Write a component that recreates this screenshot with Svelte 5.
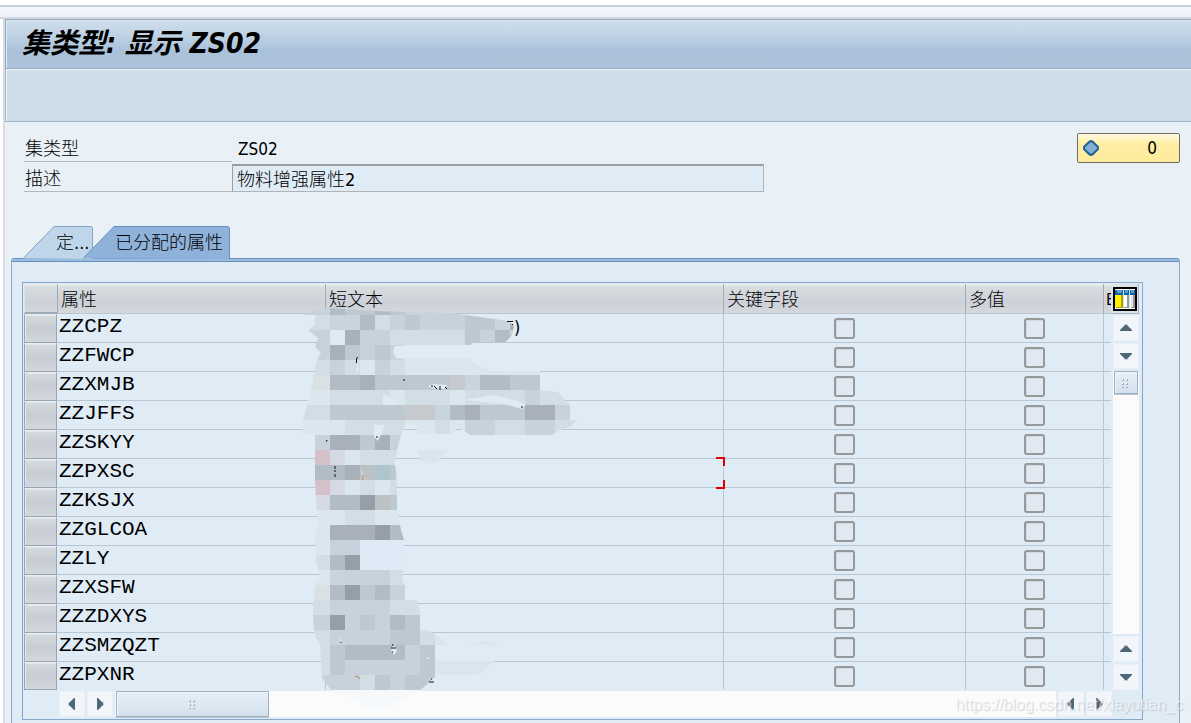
<script>
  const rows = [
    'ZZCPZ', 'ZZFWCP', 'ZZXMJB', 'ZZJFFS', 'ZZSKYY', 'ZZPXSC', 'ZZKSJX',
    'ZZGLCOA', 'ZZLY', 'ZZXSFW', 'ZZZDXYS', 'ZZSMZQZT', 'ZZPXNR',
  ];
  const cursorRow = 5;

  let activeTab = $state(1);
  let description = $state('物料增强属性2');

  const tabs = [
    { label: '定...', width: 70, pad: 33 },
    { label: '已分配的属性', width: 147, pad: 32 },
  ];

  // mosaic over the short texts, one letter per 15px block
  const colors = {
    a: '#dbe6ee', b: '#d2dee6', c: '#c8d2dc', d: '#bec8d1', e: '#b2bcc5',
    f: '#a8b0b9', g: '#969fa7', w: '#deebf6', p: '#d3c0c9', q: '#d5d9e4',
    l: '#c8d5df', k: '#b0c4d0', n: '#bbc1c4', u: '#dae1e5', v: '#c6cacf',
  };
  const mosaic = [
    'ceddedcccccc',
    'bllebcdcccddlfedd',
    'cwfccbbbbbdcecdee',
    'cfdcdcwwwww',
    'bcbacbaaaaaaaaaaa',
    'ueefdddddvleeddd',
    'abbbbabbbabbbbcbb',
    'bdddddvvlefdddffc',
    'aabbbbaabaccbbccbb',
    'cffdfcb',
    'pqabbba',
    'eefnkdb',
    'pqababa',
    'qeegndd',
    'aabbaaa',
    'afffgee',
    'accwwww',
    'begwwww',
    'alcccbb',
    'uegdecc',
    'bccccbb',
    'cgcdced',
    'bccccddb',
    'bdeeeecd',
    'bdcccccd',
    'cccbdcdd',
  ];
  const outline = 'M304 315 L318 309 330 308 375 311 450 313 480 317 508 321 514 326 512 336 505 342 472 342 471 345 395 346 393 352 396 358 420 362 450 364 472 362 472 366 485 371 540 371 540 390 558 392 566 401 570 405 576 411 577 419 572 426 560 430 552 435 470 435 458 427 452 434 418 434 416 425 405 425 400 438 396 455 394 462 396 470 397 490 397 509 401 530 404 540 404 567 402 580 405 585 405 600 417 600 420 612 420 630 430 631 435 634 435 677 425 686 420 690 331 690 322 678 320 645 314 633 313 610 315 583 320 577 316 560 315 540 318 522 316 500 315 480 315 435 303 433 303 421 308 400 312 385 317 360 321 353 315 347 318 338 308 330 315 325 315 315 Z';
</script>

{#snippet arrow(dir, label)}
  <button class="arrow" aria-label={label}>
    <svg class={dir} width="14" height="14" viewBox="0 0 14 14">
      <path d="M5 3h4v1H4z" fill="#c8d2d8" />
      <path d="M6 4h2l5 5v1H1V9z" fill="#4f6676" />
    </svg>
  </button>
{/snippet}

{#snippet grip()}
  <svg width="10" height="10" viewBox="0 0 10 10" fill="#9fb0c0">
    <path d="M1 1h2v2H1zM5 1h2v2H5zM1 5h2v2H1zM5 5h2v2H5zM1 9h2v1H1zM5 9h2v1H5z" />
    <path d="M1 1h1v1H1zM5 1h1v1H5zM1 5h1v1H1zM5 5h1v1H5z" fill="#fff" />
  </svg>
{/snippet}

<div class="window">
  <div class="strip"></div>
  <div class="body">
    <header><h1>集类型: 显示 ZS02</h1></header>
    <div class="toolbar"></div>

    <main>
      <div class="top">
        <div class="form">
          <span class="label">集类型</span>
          <span class="value">ZS02</span>
          <label class="label" for="desc">描述</label>
          <input id="desc" type="text" bind:value={description} readonly />
        </div>
        <button class="count">
          <svg width="18" height="18" viewBox="0 0 18 18">
            <path d="M9 2l2 1 5 5v2l-5 5-2 1-2-1-5-5V8l5-5z" fill="#86add6" stroke="#1c6596" stroke-width="2" stroke-linejoin="round" />
          </svg>
          <span>0</span>
        </button>
      </div>

      <div class="tabs" role="tablist">
        {#each tabs as tab, i}
          <button
            class="tab"
            class:active={i === activeTab}
            role="tab"
            aria-selected={i === activeTab}
            style="width: {tab.width}px; padding-left: {tab.pad}px"
            onclick={() => (activeTab = i)}
          >
            <svg width={tab.width} height="33" viewBox="0 0 {tab.width} 33">
              <path d="M0 32.5L30 1.5Q31 .5 32 .5H{tab.width - 2.5}q2 0 2 2V33" />
            </svg>
            <span>{tab.label}</span>
          </button>
        {/each}
      </div>

      <div class="panel">
        <div class="frame">
          <div class="grid">
            <table>
              <colgroup>
                <col class="c-sel" /><col class="c-attr" /><col /><col class="c-key" /><col class="c-multi" /><col class="c-more" />
              </colgroup>
              <thead>
                <tr>
                  <th aria-label="选择"></th>
                  <th>属性</th>
                  <th class="text-head">
                    短文本
                    <svg class="mosaic" width="285" height="404" viewBox="300 305 285 404">
                      <defs><clipPath id="smear"><path d={outline} /></clipPath></defs>
                      <g fill="#d9e6ee">
                        <path d="M393 358h79v4l17 9-10 4h-85zM418 450h28l-6 10-10 4-10-4zM435 633l12 12h-12zM470 645l16-5 13 5zM435 661h60l-18 14h-42z" />
                      </g>
                      <g clip-path="url(#smear)" shape-rendering="crispEdges">
                        {#each mosaic as line, r}
                          {#each line as cell, c}
                            <rect x={c === 0 ? 300 : 315 + c * 15} y={300 + r * 15} width={c === 0 ? 30 : 15} height="15" fill={colors[cell]} />
                          {/each}
                        {/each}
                      </g>
                      <g fill="#deebf5">
                        <path d="M465 400l27-5 24 5 10 5-4 4-18-5zM374 425h11l-7 16-4-4zM428 386l5-2 14 1-3 4-12-1zM383 394l12 6 1 5h-13zM391 650l3-7 3 8-3 4zM356 371l3-12-1 12zM360 466l5 14-2-1zM340 636l2 8-2-4zM427 657l4 2h-4z" />
                        <path d="M331 690h89l-24 12-8 8h-20l-12-9z" fill="#f6f9fc" />
                      </g>
                      <path d="M356.500 363v-4l1-2M432 385v2m2-1l3 3m3-3v4m5-3l2 2M403 380h2M521 407h2M327 440v1h-1M335 466v3m0 1v2m0 2v3M376 437h2M393 644v2m-2 2h5m-4 4h1M341 642v1M429 682h5m-3-3h1M507 321.500h6m-1 3h1" fill="none" stroke="#111" />
                      <path d="M355 677l2-1 3 3M363 475v5" fill="none" stroke="#bc7b36" />
                      <text x="514" y="334" font-size="18">)</text>
                    </svg>
                  </th>
                  <th>关键字段</th>
                  <th>多值</th>
                  <th class="more">E</th>
                </tr>
              </thead>
              <tbody>
                {#each rows as name, i}
                  <tr>
                    <td class="sel"><button aria-label="选择 {name}"></button></td>
                    <td class="name">{name}</td>
                    <td class="short">
                      {#if i === cursorRow}
                        <svg class="cursor" width="9" height="32" viewBox="0 0 9 32">
                          <path d="M0 1h8v8M8 23v8H0" fill="none" stroke="#e00000" stroke-width="2" />
                        </svg>
                      {/if}
                    </td>
                    <td class="check"><input type="checkbox" aria-label="{name} 关键字段" /></td>
                    <td class="check"><input type="checkbox" aria-label="{name} 多值" /></td>
                    <td></td>
                  </tr>
                {/each}
              </tbody>
            </table>

            <div class="vside">
              <button class="config" aria-label="配置">
                <svg width="24" height="24" viewBox="0 0 24 24" shape-rendering="crispEdges">
                  <path d="M0 0h24v24H0z" />
                  <path d="M2 2h20v20H2z" fill="#fff" />
                  <path d="M2 3h20v5H2z" fill="#0965a8" />
                  <path d="M4 3h5v3H4zM12 3h3v3h-3zM18 3h3v3h-3z" fill="#5b9bd0" />
                  <path d="M2 8h6v12H2z" fill="#fff000" />
                  <path d="M8 8h2v13H3v-1h5z" fill="#aaa000" />
                  <path d="M14 8h2v13h-5v-1h3zM20 8h2v13h-4v-1h2z" fill="#999" />
                  <path d="M18 8h2v12h-2z" fill="#dfe5ec" />
                  <path d="M10 2h1v20h-1zM16 2h1v20h-1z" fill="#d9e2eb" />
                </svg>
              </button>
              <div class="vbar">
                {@render arrow('up', '第一行')}
                {@render arrow('down', '下一行')}
                <div class="vtrack"><div class="thumb">{@render grip()}</div></div>
                {@render arrow('up', '上一行')}
                {@render arrow('down', '最后一行')}
              </div>
            </div>
          </div>

          <div class="hbar">
            {@render arrow('left', '最左')}
            {@render arrow('right', '向右')}
            <div class="htrack"><div class="thumb">{@render grip()}</div></div>
            {@render arrow('left', '向左')}
            {@render arrow('right', '最右')}
          </div>
        </div>
      </div>
    </main>
  </div>
  <div class="watermark">https://blog.csdn.net/xiayutian_c</div>
</div>

<style>
  :global(body) { margin: 0; background: #fff; }
  .window {
    position: relative; box-sizing: border-box; height: 100vh; min-height: 720px; overflow: hidden;
    padding-top: 5px; display: flex; flex-direction: column; color: #000;
    font-family: 'DejaVu Sans Condensed', 'Noto Sans CJK SC', sans-serif; font-size: 18px; font-weight: 300;
  }
  button, input { font: inherit; color: inherit; box-sizing: border-box; margin: 0; padding: 0; }
  svg { display: block; }
  .strip {
    flex: none; box-sizing: border-box; height: 14px; border-top: 2px solid #c9d0dc; border-bottom: 2px solid #d2d8e3;
    background: linear-gradient(#f7f9fd, #edf2f8);
  }
  .body { flex: 1; margin-left: 3px; border-left: 2px solid #d6dbe6; display: flex; flex-direction: column; }
  header {
    flex: none; box-sizing: border-box; height: 50px; padding-left: 16px; display: flex; align-items: center;
    border: 1px solid #94a9c0; border-right: none; box-shadow: inset 1px 1px #dce8f2;
    background: linear-gradient(#cfdfec, #bed1e3 35%, #aac1da 65%, #aec4db);
  }
  h1 { margin: 0; font-size: 28px; line-height: 32px; font-weight: 700; font-style: italic; }
  .toolbar {
    flex: none; box-sizing: border-box; height: 53px; background: #cfdde8;
    border: 1px solid #9fb3c7; border-width: 0 0 1px 1px; box-shadow: inset 1px 1px #f2f7fb;
  }
  main { flex: 1; background: #e9f0f6; display: flex; flex-direction: column; padding: 10px 11px 0 6px; }

  .top { display: flex; justify-content: space-between; align-items: flex-start; padding-left: 13px; }
  .form { display: grid; grid-template-columns: 208px 532px; grid-auto-rows: 30px; }
  .label { border-bottom: 1px solid #b4b8bc; padding: 5px 1px 0; line-height: 24px; }
  .value { padding: 5px 6px 0; line-height: 24px; font-size: 17px; font-weight: 400; }
  .form input {
    height: 28px; align-self: end; padding: 0 4px 2px; border: 1px solid #b0b4b8; border-top: 2px solid #9b9fa3;
    border-left-color: #9b9fa3; background: #dfebf5; border-radius: 0;
  }
  .count {
    width: 103px; height: 30px; margin-top: 1px; padding: 0 22px 0 4px; border: 1px solid #716b62; border-radius: 2px;
    display: flex; align-items: center; justify-content: space-between; font-weight: 400; font-size: 17px;
    background: linear-gradient(#fffbe0, #ffeea4 35%, #feeb9b);
  }

  .tabs { flex: none; display: flex; margin-top: 34px; padding-left: 12px; height: 32px; }
  .tab { position: relative; border: none; background: none; text-align: left; height: 32px; white-space: nowrap; }
  .tab + .tab { margin-left: -10px; }
  .tab svg { position: absolute; left: 0; top: 0; fill: #bfd5e9; stroke: #86a5c5; }
  .tab.active { z-index: 1; }
  .tab.active svg { fill: #8fb2db; stroke: #6790bb; }
  .tab span { position: relative; display: block; padding-top: 2px; line-height: 30px; }
  .panel {
    flex: 1; border: 1px solid #8aa8cc; border-width: 0 1px; padding: 24px 36px 0 10px; background: #dfebf5;
    background-image: linear-gradient(#6790bb 1px, #9abce0 1px, #9abce0 3px, #6790bb 3px, #6790bb 4px, transparent 4px);
    border-radius: 3px 3px 0 0;
  }
  .frame { border: 1px solid #86a6cb; padding: 1px 3px 2px 1px; background: #dfebf5; }
  .grid { display: flex; }

  table { flex: 1; width: 100%; table-layout: fixed; border-collapse: separate; border-spacing: 0; }
  .c-sel { width: 33px; }
  .c-attr { width: 268px; }
  .c-key { width: 242px; }
  .c-multi { width: 138px; }
  .c-more { width: 8px; }
  th, td { box-sizing: border-box; padding: 0; border-bottom: 1px solid #b9c7d5; border-left: 1px solid #b9c7d5; }
  th {
    height: 30px; padding: 2px 0 0 3px; text-align: left; font-weight: 300; line-height: 26px; white-space: nowrap;
    background: linear-gradient(#e9edef, #d7dcdf 12%, #cdd1d9 65%, #d5d9dc); border-left-color: #a5abb4;
  }
  th:first-child { border-left-color: #dce2e8; border-bottom: 2px solid #9daab8; }
  .text-head { position: relative; }
  .more { overflow: hidden; font-weight: 400; font-size: 16px; padding-left: 2px; }
  .mosaic { position: absolute; left: -26px; top: 21px; z-index: 1; pointer-events: none; }
  td { height: 29px; }
  tr:last-child td { height: 28px; border-bottom: none; }
  td.sel { border: none; }
  td.name { border-left: none; }
  .sel button {
    display: block; width: 33px; height: 29px; border: 1px solid #98a5b7; border-top-color: #e9edf1;
    background: linear-gradient(#d6dbdf, #c7ccd5 50%, #d3d7dd); box-shadow: inset 1px 1px #e3e7eb;
  }
  tr:last-child .sel button { height: 28px; }
  .name { padding-left: 2px; font: 21px/26px 'Courier New', 'Liberation Mono', monospace; vertical-align: top; }
  .short { position: relative; }
  .cursor { position: absolute; right: -2px; top: -2px; z-index: 1; }
  .check { text-align: center; vertical-align: middle; }
  .check input {
    appearance: none; display: block; width: 21px; height: 21px; margin: 0 auto; border: 2px solid #969899;
    border-radius: 3px; background: #e0e9f2; box-shadow: inset 1px 1px #d1dae3;
  }

  .arrow {
    flex: none; width: 26px; height: 26px; border: 1px solid #eaf0f7; background: #f2f6fb;
    display: flex; align-items: center; justify-content: center;
  }
  .down { transform: rotate(180deg); }
  .left { transform: rotate(-90deg); }
  .right { transform: rotate(90deg); }
  .thumb {
    box-sizing: border-box; border: 1px solid #9dafc1; background: linear-gradient(#e6eff7, #d3e1ec);
    box-shadow: 0 1px #b9c5d1, inset 1px 1px #f2f7fb; display: flex; align-items: center; justify-content: center;
  }
  .vside { flex: none; width: 28px; display: flex; flex-direction: column; }
  .config {
    height: 30px; border: 1px solid #a9b4c1; border-width: 0 1px 1px 0; background: #dce2e8;
    display: flex; align-items: center; justify-content: center;
  }
  .vbar { flex: 1; display: flex; flex-direction: column; align-items: flex-end; gap: 2px; padding-top: 1px; }
  .vtrack { flex: 1; width: 26px; background: #fbfbfc; }
  .vtrack .thumb { height: 23px; margin: 0 1px; }
  .hbar { display: flex; gap: 2px; margin: 1px 27px 0 35px; }
  .htrack { flex: 1; height: 26px; background: #fbfbfc; }
  .htrack .thumb { width: 153px; height: 26px; margin-left: 1px; }

  .watermark {
    position: absolute; right: 8px; bottom: 6px; z-index: 2; font: 16px/24px 'Liberation Sans', sans-serif;
    color: rgba(255, 255, 255, 0.6); text-shadow: 1px 1px 1px rgba(110, 120, 130, 0.3); pointer-events: none;
  }
</style>
